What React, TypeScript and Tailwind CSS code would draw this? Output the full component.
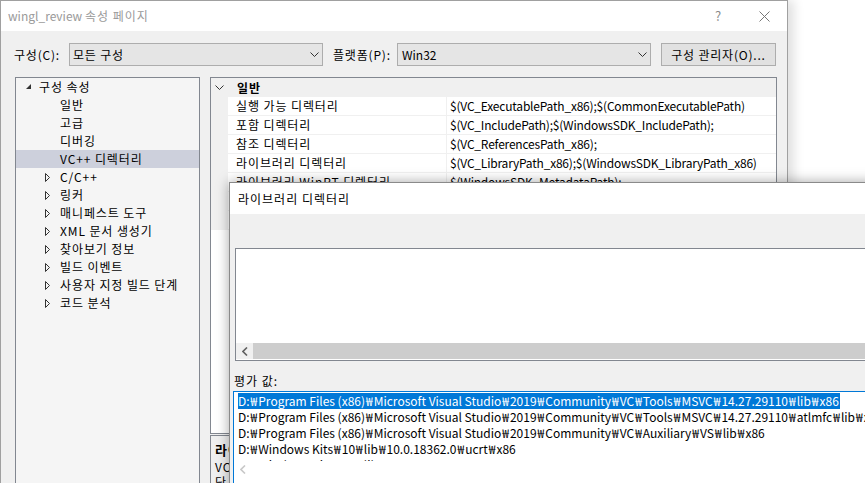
import React from "react";

const Chevron = ({ className = "" }: { className?: string }) => (
  <svg width="9" height="6" viewBox="0 0 9 6" className={className}>
    <polyline points="0.5,0.5 4.5,4.5 8.5,0.5" fill="none" stroke="#333" strokeWidth="1" />
  </svg>
);

const Expanded = () => (
  <svg width="6" height="6" viewBox="0 0 6 6">
    <polygon points="5,0 5,5 0,5" fill="#333" />
  </svg>
);

const Collapsed = () => (
  <svg width="5" height="9" viewBox="0 0 5 9">
    <polygon points="0.5,0.5 4.5,4.5 0.5,8.5" fill="none" stroke="#333" strokeWidth="1" />
  </svg>
);

const LeftArrow = ({ color }: { color: string }) => (
  <svg width="6" height="9" viewBox="0 0 6 9">
    <polyline points="5,0.5 1,4.5 5,8.5" fill="none" stroke={color} strokeWidth="1.6" />
  </svg>
);

const tree: { label: string; level: number; kind: "exp" | "col" | "none"; sel?: boolean }[] = [
  { label: "구성 속성", level: 0, kind: "exp" },
  { label: "일반", level: 1, kind: "none" },
  { label: "고급", level: 1, kind: "none" },
  { label: "디버깅", level: 1, kind: "none" },
  { label: "VC++ 디렉터리", level: 1, kind: "none", sel: true },
  { label: "C/C++", level: 1, kind: "col" },
  { label: "링커", level: 1, kind: "col" },
  { label: "매니페스트 도구", level: 1, kind: "col" },
  { label: "XML 문서 생성기", level: 1, kind: "col" },
  { label: "찾아보기 정보", level: 1, kind: "col" },
  { label: "빌드 이벤트", level: 1, kind: "col" },
  { label: "사용자 지정 빌드 단계", level: 1, kind: "col" },
  { label: "코드 분석", level: 1, kind: "col" },
];

const props: [string, string][] = [
  ["실행 가능 디렉터리", "$(VC_ExecutablePath_x86);$(CommonExecutablePath)"],
  ["포함 디렉터리", "$(VC_IncludePath);$(WindowsSDK_IncludePath);"],
  ["참조 디렉터리", "$(VC_ReferencesPath_x86);"],
  ["라이브러리 디렉터리", "$(VC_LibraryPath_x86);$(WindowsSDK_LibraryPath_x86)"],
  ["라이브러리 WinRT 디렉터리", "$(WindowsSDK_MetadataPath);"],
  ["소스 디렉터리", "$(VC_SourcePath);"],
  ["제외 디렉터리", "$(CommonExcludePath);"],
];

const evalLines = [
  "D:₩Program Files (x86)₩Microsoft Visual Studio₩2019₩Community₩VC₩Tools₩MSVC₩14.27.29110₩lib₩x86",
  "D:₩Program Files (x86)₩Microsoft Visual Studio₩2019₩Community₩VC₩Tools₩MSVC₩14.27.29110₩atlmfc₩lib₩x86",
  "D:₩Program Files (x86)₩Microsoft Visual Studio₩2019₩Community₩VC₩Auxiliary₩VS₩lib₩x86",
  "D:₩Windows Kits₩10₩lib₩10.0.18362.0₩ucrt₩x86",
  "D:₩Windows Kits₩10₩lib₩10.0.18362.0₩um₩x86",
];

const Path = ({ text }: { text: string }) => {
  const parts = text.split("₩");
  return (
    <>
      {parts.map((p, i) => (
        <React.Fragment key={i}>
          {i > 0 ? <span className="mx-[1px]">₩</span> : null}
          {p}
        </React.Fragment>
      ))}
    </>
  );
};

export default function App() {
  return (
    <div className="w-[865px] h-[483px] overflow-hidden relative bg-white text-[12px] leading-[16px] text-black font-['Segoe_UI','Noto_Sans_CJK_KR','Noto_Sans',sans-serif]">
      {/* main dialog */}
      <div className="w-[788px] h-[520px] bg-[#f0f0f0] border-l border-r border-t border-[#a0a0a0] shadow-[6px_0_10px_rgba(0,0,0,0.12)] flex flex-col">
        <div className="h-[30px] bg-white flex items-center pl-[7px] text-[#9a9a9a] shrink-0">
          <span className="flex-1">
            wingl_review <span className="tracking-[1px]">속성 페이지</span>
          </span>
          <span className="w-[10px] text-[13px] text-[#8a8a8a] mr-[34px]">?</span>
          <svg width="11" height="11" viewBox="0 0 11 11" className="mr-[17px]">
            <path d="M0.5 0.5 L10.5 10.5 M10.5 0.5 L0.5 10.5" stroke="#777" strokeWidth="1" />
          </svg>
        </div>
        {/* controls row */}
        <div className="mt-[12px] h-[23px] flex items-center shrink-0 tracking-[0.8px]">
          <span className="ml-[13px] w-[55px]">구성(C):</span>
          <div className="w-[254px] h-[23px] bg-[#e5e5e5] border border-[#adadad] flex items-center pl-[3px] pr-[3px]">
            <span className="flex-1">모든 구성</span>
            <Chevron />
          </div>
          <span className="ml-[10px] w-[64px]">플랫폼(P):</span>
          <div className="w-[254px] h-[23px] bg-[#e5e5e5] border border-[#adadad] flex items-center pl-[4px] pr-[3px]">
            <span className="flex-1 tracking-normal">Win32</span>
            <Chevron />
          </div>
          <div className="ml-[10px] w-[115px] h-[23px] bg-[#e1e1e1] border border-[#adadad] flex items-center justify-center">
            구성 관리자(O)...
          </div>
        </div>
        {/* panels */}
        <div className="mt-[11px] flex ml-[14px]">
          <div className="w-[185px] h-[420px] bg-[#f5f5f5] border border-[#828790] flex flex-col tracking-[0.9px]">
            {tree.map((t) => (
              <div
                key={t.label}
                className={`h-[18px] flex items-center ${t.sel ? "bg-[#cdd0dc]" : ""}`}
              >
                {t.level === 0 ? (
                  <>
                    <span className="w-[11px] ml-[10px] flex items-center">
                      <Expanded />
                    </span>
                    <span className="ml-[2px]">{t.label}</span>
                  </>
                ) : (
                  <>
                    <span className="w-[15px] ml-[29px] flex items-center">
                      {t.kind === "col" ? <Collapsed /> : null}
                    </span>
                    <span>{t.label}</span>
                  </>
                )}
              </div>
            ))}
          </div>
          <div className="ml-[10px] w-[567px] flex flex-col">
            <div className="h-[357px] bg-white border border-[#828790] flex flex-col">
              <div className="h-[19px] flex items-center bg-[#f0f0f0]">
                <span className="w-[20px] pl-[4px] flex items-center">
                  <Chevron />
                </span>
                <span className="ml-[6px] font-bold tracking-[0.9px]">일반</span>
              </div>
              {props.map(([n, v]) => (
                <div key={n} className="h-[19px] flex border-b border-[#f0f0f0]">
                  <div className="w-[17px] bg-[#f0f0f0]" />
                  <div className="w-[219px] pl-[8px] flex items-center border-r border-[#f0f0f0] whitespace-nowrap overflow-hidden tracking-[0.9px]">{n}</div>
                  <div className="flex-1 pl-[3px] flex items-center whitespace-nowrap overflow-hidden tracking-[-0.2px]">{v}</div>
                </div>
              ))}
            </div>
            <div className="mt-[1px] h-[60px] border border-[#828790] bg-[#f0f0f0] pl-[4px] pt-[5px] tracking-[0.9px]">
              <div className="font-bold text-[13px] leading-[18px]">라이브러리 디렉터리</div>
              <div className="leading-[15px]">VC++ 프로젝트를 빌드하는 동안 사용할 라이브러리 파일의 경로입니다.</div>
              <div className="leading-[15px]">단, 환경 변수 LIB에 해당합니다.</div>
            </div>
          </div>
        </div>
      </div>

      {/* sub dialog */}
      <div className="absolute left-[229px] top-[182px] w-[700px] h-[340px] bg-[#f0f0f0] border border-[#8a8a8a] shadow-[0_0_12px_rgba(0,0,0,0.35)] flex flex-col">
        <div className="h-[31px] bg-white flex items-center pl-[8px] shrink-0 tracking-[1px]">라이브러리 디렉터리</div>
        <div className="h-[34px] shrink-0" />
        <div className="ml-[5px] h-[113px] bg-white border border-[#828790] flex flex-col">
          <div className="flex-1" />
          <div className="h-[16px] flex mb-[1px]">
            <div className="w-[17px] bg-[#f0f0f0] flex items-center justify-center">
              <LeftArrow color="#606060" />
            </div>
            <div className="flex-1 bg-[#cdcdcd]" />
          </div>
        </div>
        <div className="ml-[4px] mt-[12px] h-[16px] tracking-[1px]">평가 값:</div>
        <div className="ml-[3px] mt-[2px] h-[100px] bg-white border border-[#0078d7] flex flex-col">
          <div className="h-[69px] overflow-hidden pl-[4px] pt-[1px]">
            {evalLines.map((l, i) => (
              <div key={i} className="h-[16px] flex items-center whitespace-nowrap">
                <span className={i === 0 ? "bg-[#0078d7] text-white h-[16px] flex items-center pr-[1px]" : ""}>
                  <Path text={l} />
                </span>
              </div>
            ))}
          </div>
          <div className="h-[16px] flex">
            <div className="w-[17px] flex items-center justify-center">
              <LeftArrow color="#c8c8c8" />
            </div>
            <div className="flex-1" />
          </div>
        </div>
      </div>
    </div>
  );
}
